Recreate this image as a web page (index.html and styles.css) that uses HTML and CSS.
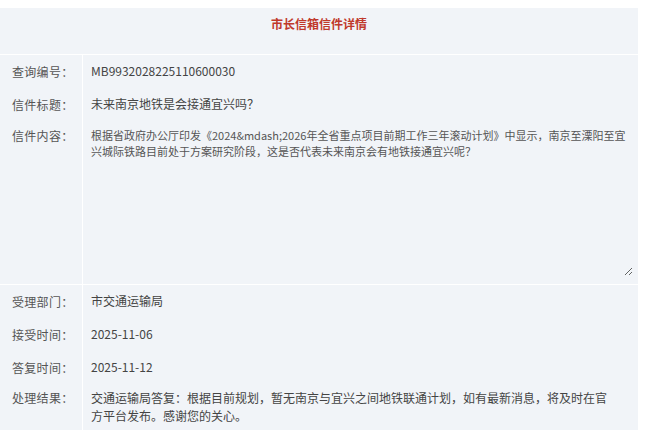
FILE: index.html
```html
<!DOCTYPE html>
<html lang="zh">
<head>
<meta charset="utf-8">
<title>市长信箱信件详情</title>
<link rel="stylesheet" href="styles.css">
</head>
<body>
<div class="detail">
  <div class="head">市长信箱信件详情</div>
  <div class="row">
    <div class="label">查询编号：</div>
    <div class="value">MB9932028225110600030</div>
  </div>
  <div class="row">
    <div class="label">信件标题：</div>
    <div class="value">未来南京地铁是会接通宜兴吗？</div>
  </div>
  <div class="row row-content">
    <div class="label">信件内容：</div>
    <div class="value-box">
      <div class="content-area">根据省政府办公厅印发《2024&amp;mdash;2026年全省重点项目前期工作三年滚动计划》中显示，南京至溧阳至宜兴城际铁路目前处于方案研究阶段，这是否代表未来南京会有地铁接通宜兴呢？</div>
    </div>
  </div>
  <div class="row">
    <div class="label">受理部门：</div>
    <div class="value">市交通运输局</div>
  </div>
  <div class="row">
    <div class="label">接受时间：</div>
    <div class="value">2025-11-06</div>
  </div>
  <div class="row">
    <div class="label">答复时间：</div>
    <div class="value">2025-11-12</div>
  </div>
  <div class="row row-result">
    <div class="label">处理结果：</div>
    <div class="value">交通运输局答复：根据目前规划，暂无南京与宜兴之间地铁联通计划，如有最新消息，将及时在官方平台发布。感谢您的关心。</div>
  </div>
</div>
</body>
</html>
```

FILE: styles.css
```css
html, body {
  margin: 0;
  padding: 0;
  background: #ffffff;
}
body {
  padding: 8px 12px 0 0;
  font-family: "Noto Sans CJK SC", sans-serif;
  font-size: 12px;
  color: #444;
  text-spacing-trim: space-all;
}
.detail {
  width: 638px;
  display: flex;
  flex-direction: column;
  gap: 1px;
  background: #ffffff;
}
.head {
  height: 46px;
  background: #f1f4f8;
  color: #c0392b;
  font-weight: bold;
  font-size: 12px;
  text-align: center;
  line-height: 32px;
}
.row {
  display: grid;
  grid-template-columns: 82px 1fr;
  column-gap: 1px;
  height: 32px;
}
.label, .value, .value-box {
  background: #f1f4f8;
}
.label {
  color: #555;
  padding: 0 0 0 12px;
  line-height: 33px;
  white-space: nowrap;
  letter-spacing: 0.3px;
}
.value {
  color: #444;
  padding: 0 12px 0 8px;
  line-height: 32px;
}
.row-content {
  height: 163px;
}
.row-content .label {
  line-height: 29px;
}
.value-box {
  padding: 6px 0 0 0;
}
.content-area {
  width: 542px;
  height: 149px;
  padding: 0 0 0 8px;
  font-size: 11px;
  line-height: 16px;
  color: #555;
  overflow: auto;
  resize: both;
}
.row-result {
  height: 46px;
}
.row-result .label {
  line-height: 28px;
}
.row-result .value {
  line-height: 18px;
  padding-top: 5px;
  padding-right: 25px;
}
```
